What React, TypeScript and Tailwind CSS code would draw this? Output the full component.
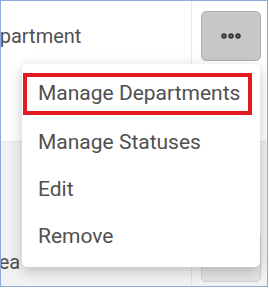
import { MoreHorizontal } from 'lucide-react';

const items = ['Manage Statuses', 'Edit', 'Remove'];

export default function App() {
  return (
    <div className="w-[269px] h-[288px] bg-white overflow-hidden font-['Roboto',sans-serif]">
      <div className="relative w-[268px] h-[287px] border border-[#8eaade] overflow-hidden">
        {/* Table rows */}
        <div className="flex h-[141px] bg-white border-b border-[#e6e6e6]">
          <div className="flex-1 overflow-hidden border-r border-[#e8e8e8] pt-[21px]">
            <span className="block ml-[-25px] text-[20px] leading-[28px] text-[#505050] whitespace-nowrap">Department</span>
          </div>
          <div className="w-[75px] pt-[10px] pl-[9px]">
            <button className="w-[60px] h-[50px] bg-[#c8c8c8] border border-[#b0b0b0] rounded-[5px] flex items-center justify-center">
              <MoreHorizontal className="w-6 h-6 text-[#333]" strokeWidth={3.5} />
            </button>
          </div>
        </div>
        <div className="flex h-[145px] bg-[#f2f2f2]">
          <div className="flex-1 flex items-end overflow-hidden border-r border-[#e2e2e2] pb-[10px]">
            <span className="ml-[-22px] text-[20px] text-[#505050] whitespace-nowrap">Area</span>
          </div>
          <div className="w-[75px] pt-[90px] pl-[9px]">
            <div className="w-[60px] h-[50px] bg-[#e4e4e4] border border-[#cfcfcf] rounded-[5px]" />
          </div>
        </div>

        {/* Dropdown menu */}
        <div className="absolute left-[21px] top-[63px] w-[238px] bg-white rounded-[5px] shadow-[0_4px_14px_rgba(0,0,0,0.22)] pt-[9px] pb-[7px]">
          <div className="ml-[1px] w-[229px] h-[42px] border-4 border-[#e41b23] flex items-center pl-[11px] text-[21px] text-[#505050] whitespace-nowrap">
            Manage Departments
          </div>
          <div className="mt-[4px]">
            {items.map(label => (
              <div key={label} className="h-[47px] flex items-center pl-[16px] text-[21px] text-[#505050]">
                {label}
              </div>
            ))}
          </div>
        </div>
      </div>
    </div>
  );
}
